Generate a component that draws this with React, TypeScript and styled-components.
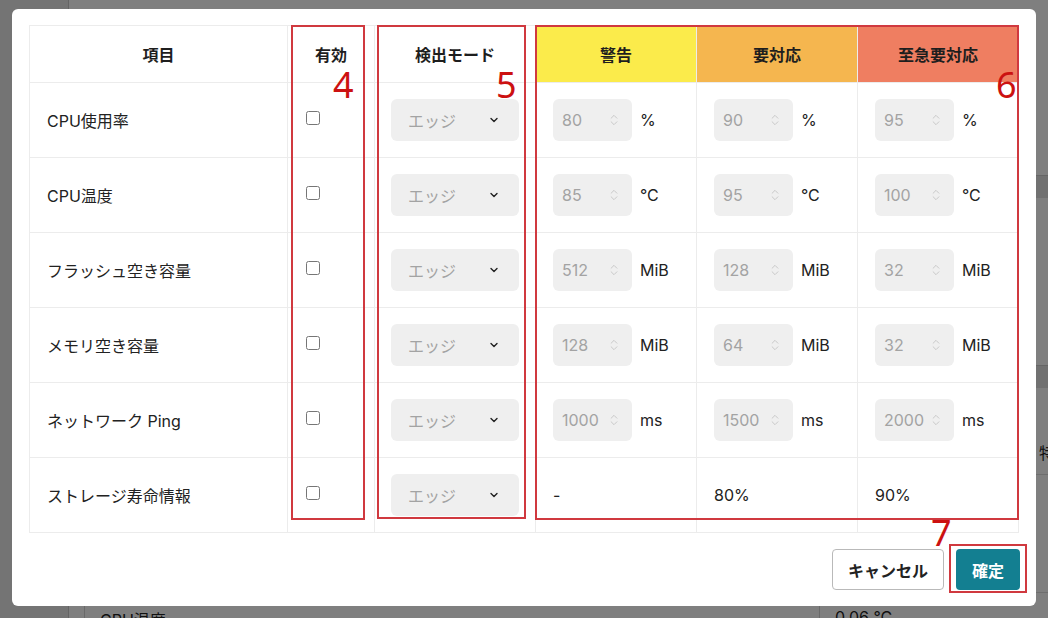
import React from 'react';
import styled, { createGlobalStyle } from 'styled-components';
import { ChevronDown, ChevronsUpDown } from 'lucide-react';

type Row = {
  name: string;
  unit?: string;
  values: string[];
  plain?: boolean;
};

type Tone = 'none' | 'warn' | 'action' | 'urgent';

const rows: Row[] = [
  { name: 'CPU使用率', unit: '%', values: ['80', '90', '95'] },
  { name: 'CPU温度', unit: '°C', values: ['85', '95', '100'] },
  { name: 'フラッシュ空き容量', unit: 'MiB', values: ['512', '128', '32'] },
  { name: 'メモリ空き容量', unit: 'MiB', values: ['128', '64', '32'] },
  { name: 'ネットワーク Ping', unit: 'ms', values: ['1000', '1500', '2000'] },
  { name: 'ストレージ寿命情報', values: ['-', '80%', '90%'], plain: true },
];

const tones: Record<Tone, string> = {
  none: '#ffffff',
  warn: '#fbeb4b',
  action: '#f5b64f',
  urgent: '#ef7e61',
};

const GlobalStyle = createGlobalStyle`
  html, body {
    margin: 0;
    padding: 0;
    height: 100%;
    overflow: hidden;
  }
  body {
    font-family: "Inter", "Noto Sans CJK JP", sans-serif;
    color: #222222;
  }
`;

const App = () => {
  return (
    <>
      <GlobalStyle />
      <Page>
        <Sidebar />
        <Main>
          <BgHeader />
          <BgBody />
          <BgHeader />
          <BgRow height="86px">
            <BgCell width="735px" />
            <BgCell width="204px" />
            <BgCell width="auto" pad="52px">特定</BgCell>
          </BgRow>
          <BgRow height="117px">
            <BgCell width="735px" />
            <BgCell width="204px" />
          </BgRow>
          <BgRow height="60px">
            <BgCell width="735px" pad="14px">CPU温度</BgCell>
            <BgCell width="204px" pad="14px">0.06 °C</BgCell>
          </BgRow>
        </Main>
      </Page>

      <Overlay>
        <Modal>
          <Table>
            <thead>
              <tr>
                <Th style={{ width: 257 }}>項目</Th>
                <Th style={{ width: 86 }}>有効</Th>
                <Th style={{ width: 160 }}>検出モード</Th>
                <Th tone="warn" style={{ width: 160 }}>警告</Th>
                <Th tone="action" style={{ width: 160 }}>要対応</Th>
                <Th tone="urgent">至急要対応</Th>
              </tr>
            </thead>
            <tbody>
              {rows.map(row => (
                <tr key={row.name}>
                  <Td>{row.name}</Td>
                  <Td>
                    <Check type="checkbox" />
                  </Td>
                  <Td>
                    <Select>
                      <span>エッジ</span>
                      <ChevronDown size={12} strokeWidth={2.8} color="#222" />
                    </Select>
                  </Td>
                  {row.values.map((v, i) => (
                    <Td key={i}>
                      {row.plain ? (
                        v
                      ) : (
                        <Level>
                          <NumberBox>
                            <span>{v}</span>
                            <ChevronsUpDown size={14} strokeWidth={1.6} color="#c6c6c6" />
                          </NumberBox>
                          <Unit>{row.unit}</Unit>
                        </Level>
                      )}
                    </Td>
                  ))}
                </tr>
              ))}
            </tbody>
          </Table>

          <Footer>
            <CancelButton>キャンセル</CancelButton>
            <OkButton>確定</OkButton>
          </Footer>

          <Mark style={{ left: 279, top: 16, width: 74, height: 495 }} />
          <Mark style={{ left: 365, top: 16, width: 149, height: 494 }} />
          <Mark style={{ left: 523, top: 16, width: 484, height: 495 }} />
          <Mark style={{ left: 937, top: 535, width: 78, height: 49 }} />
          <MarkNo style={{ left: 321, top: 58 }}>4</MarkNo>
          <MarkNo style={{ left: 484, top: 58 }}>5</MarkNo>
          <MarkNo style={{ left: 984, top: 58 }}>6</MarkNo>
          <MarkNo style={{ left: 919, top: 506 }}>7</MarkNo>
        </Modal>
      </Overlay>
    </>
  );
};

const Page = styled.div`
  display: flex;
  width: 1048px;
  height: 618px;
  overflow: hidden;
  background: #ffffff;
`;

const Sidebar = styled.div`
  width: 68px;
  flex-shrink: 0;
  background: #e9e9e9;
  border-right: 1px solid #c8c8c8;
`;

const Main = styled.div`
  flex: 1;
  min-width: 0;
  padding: 175px 0 0 15px;
  display: flex;
  flex-direction: column;
`;

const BgHeader = styled.div`
  height: 22px;
  flex-shrink: 0;
  background: #e2e2e2;
  border-top: 1px solid #cccccc;
`;

const BgBody = styled.div`
  height: 167px;
  flex-shrink: 0;
`;

const BgRow = styled.div<{ height: string }>`
  display: flex;
  height: ${props => props.height};
  border-bottom: 1px solid #dddddd;
  flex-shrink: 0;
`;

const BgCell = styled.div<{ width: string; pad?: string }>`
  width: ${props => props.width};
  box-sizing: border-box;
  flex-shrink: 0;
  padding: ${props => props.pad || '0'} 15px 0;
  border-left: 1px solid #d4d4d4;
  font-size: 16px;
  white-space: nowrap;
`;

const Overlay = styled.div`
  position: fixed;
  inset: 0;
  background: rgba(0, 0, 0, 0.5);
  display: flex;
  justify-content: center;
  align-items: flex-start;
  padding-top: 9px;
`;

const Modal = styled.div`
  position: relative;
  width: 1024px;
  height: 597px;
  box-sizing: border-box;
  padding: 16px 16px 16px 17px;
  background: #ffffff;
  border-radius: 6px;
  display: flex;
  flex-direction: column;
`;

const Table = styled.table`
  width: 990px;
  border-collapse: collapse;
  table-layout: fixed;
`;

const Th = styled.th<{ tone?: Tone }>`
  height: 56px;
  padding: 0;
  background: ${props => tones[props.tone || 'none']};
  border: 1px solid #ececec;
  font-size: 16px;
  font-weight: 700;
  text-align: center;
  color: #1e1e1e;
`;

const Td = styled.td`
  height: 74px;
  padding: 0 16px 0 17px;
  border: 1px solid #ececec;
  font-size: 16px;
  color: #222222;
  vertical-align: middle;
  white-space: nowrap;
`;

const Check = styled.input`
  width: 14px;
  height: 14px;
  margin: 0 0 4px 1px;
  display: block;
`;

const Select = styled.div`
  width: 128px;
  height: 42px;
  box-sizing: border-box;
  margin-left: -1px;
  padding: 0 19px 0 17px;
  display: flex;
  align-items: center;
  justify-content: space-between;
  background: #efefef;
  border-radius: 6px;
  color: #a3a3a3;
  font-size: 16px;
`;

const Level = styled.div`
  display: flex;
  align-items: center;
  gap: 8px;
`;

const NumberBox = styled.div`
  width: 79px;
  height: 42px;
  box-sizing: border-box;
  padding: 0 11px 0 9px;
  display: flex;
  align-items: center;
  justify-content: space-between;
  background: #efefef;
  border-radius: 6px;
  color: #a3a3a3;
  font-size: 16px;
`;

const Unit = styled.span`
  font-size: 16px;
  color: #222222;
`;

const Footer = styled.div`
  margin-top: 16px;
  display: flex;
  justify-content: flex-end;
  gap: 12px;
`;

const CancelButton = styled.button`
  height: 41px;
  padding: 0 15px;
  background: #ffffff;
  border: 1px solid #b9b9b9;
  border-radius: 4px;
  font-family: inherit;
  font-size: 16px;
  font-weight: 700;
  color: #222222;
`;

const OkButton = styled.button`
  height: 41px;
  padding: 0 16px;
  background: #137f91;
  border: none;
  border-radius: 4px;
  font-family: inherit;
  font-size: 16px;
  font-weight: 700;
  color: #ffffff;
`;

const Mark = styled.div`
  position: absolute;
  box-sizing: border-box;
  border: 2px solid #d0393f;
  pointer-events: none;
`;

const MarkNo = styled.div`
  position: absolute;
  font-family: "Noto Sans", sans-serif;
  font-size: 36px;
  line-height: 36px;
  color: #cc1111;
`;

export default App;
